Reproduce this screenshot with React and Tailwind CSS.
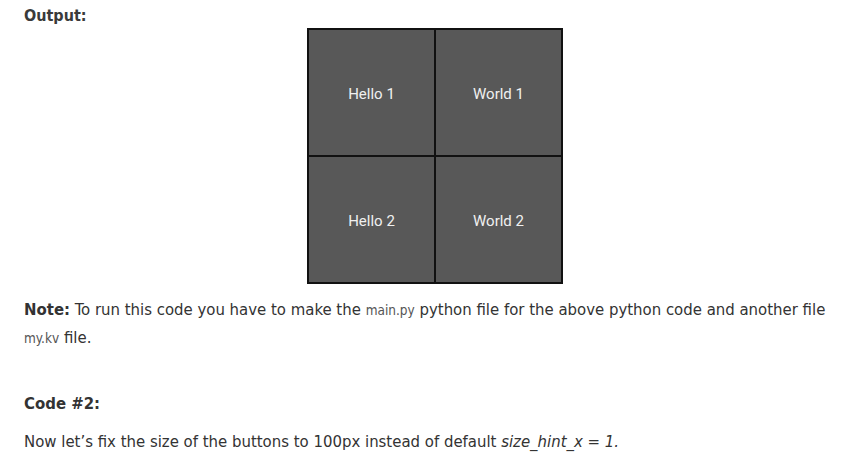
export default function App() {
  const cells = ['Hello 1', 'World 1', 'Hello 2', 'World 2'];
  return (
    <div
      className="w-[865px] h-[474px] bg-white text-[#333] overflow-hidden"
      style={{ fontFamily: '"Liberation Sans Narrow", "DejaVu Sans Condensed", sans-serif' }}
    >
      <div className="pl-6 pt-[6px]">
        <p className="text-[16px] font-bold leading-[20px] text-[#3a3a3a]">Output:</p>

        <div className="ml-[283px] mt-[2px] w-[256px] h-[256px] bg-[#111] p-[2px] grid grid-cols-2 grid-rows-2 gap-[2px]">
          {cells.map((c) => (
            <div
              key={c}
              className="bg-[#585858] flex items-center justify-center pt-[3px] text-[15px] text-[#f0f0f0] font-['Roboto',sans-serif]"
            >
              {c}
            </div>
          ))}
        </div>

        <p className="mt-[12px] text-[16.6px] leading-[28px] pr-6">
          <span className="font-bold">Note:</span> To run this code you have to make the{' '}
          <span className="text-[13.5px] text-[#555]">main.py</span> python file for the above python code and another file{' '}
          <span className="text-[13.5px] text-[#555]">my.kv</span> file.
        </p>

        <p className="mt-[38px] text-[16.6px] font-bold leading-[28px]">Code #2:</p>

        <p className="mt-[10px] text-[16.6px] leading-[28px]">
          Now let’s fix the size of the buttons to 100px instead of default <i>size_hint_x = 1.</i>
        </p>
      </div>
    </div>
  );
}
